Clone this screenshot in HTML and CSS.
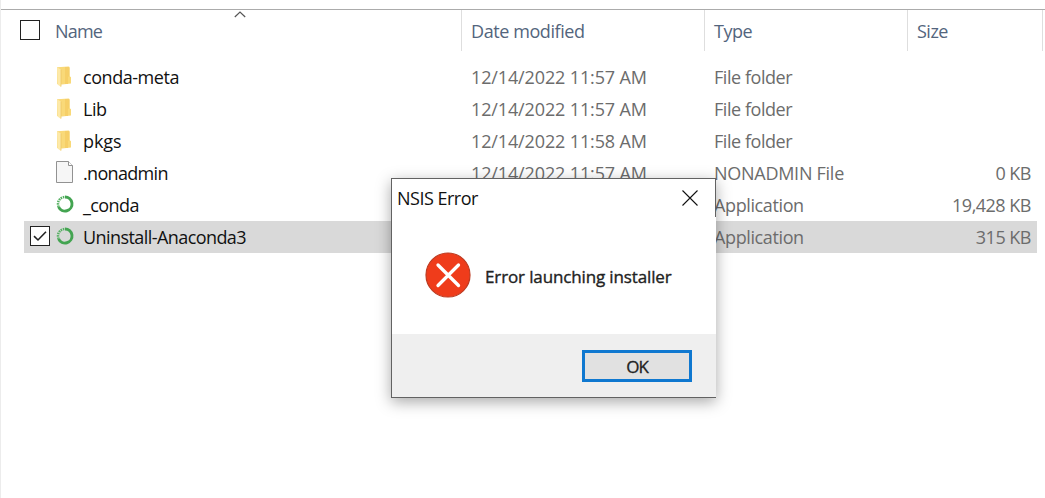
FILE: index.html
```html
<!DOCTYPE html>
<html lang="en">
<head>
<meta charset="utf-8">
<title>File list</title>
<link rel="stylesheet" href="styles.css">
</head>
<body>
<svg class="defs" aria-hidden="true">
  <symbol id="folder" viewBox="0 0 16 22">
    <path d="M1 1.2 L12.5 .6 Q13.5 .6 13.5 1.6 V10 L15 11.3 V17.5 L6 18.5 L1 18Z" fill="#f9d978"/>
    <path d="M9 1h3.5q1 0 1 1v8l-1.500 1V18H9z" fill="#f6cf68"/>
    <path d="M1 1.200 L5 3.500 V21 L1.500 18.500Z" fill="#fde9a8"/>
    <path d="M5 3.500V20.500" stroke="#eec766" stroke-width=".8"/>
  </symbol>
  <symbol id="file" viewBox="0 0 18 22">
    <path d="M.5.5h12l4 4v17H.5z" fill="#f6f6f6" stroke="#929292"/>
    <path d="M12.500.5v4h4" fill="#fff" stroke="#929292"/>
  </symbol>
  <symbol id="ring" viewBox="0 0 18 18">
    <path d="M9 2A7 7 0 1 1 2.600 11.800" fill="none" stroke="#43a451" stroke-width="2.900"/>
    <path d="M2.600 11.800A7 7 0 0 1 9 2" fill="none" stroke="#55b062" stroke-width="2.500" stroke-dasharray="1.500 .8"/>
  </symbol>
</svg>
<main class="explorer">
  <header class="head">
    <div class="cell head-name"><span class="box"></span><span>Name</span>
      <svg class="sort" width="12" height="7" viewBox="0 0 12 7"><path d="M.8 6 6 1l5.200 5" fill="none" stroke="#555" stroke-width="1.200"/></svg>
    </div>
    <div class="cell modified">Date modified</div>
    <div class="cell">Type</div>
    <div class="cell">Size</div>
  </header>
  <section class="rows">
    <div class="row"><span class="check"></span><svg class="icon folder"><use href="#folder"/></svg><span class="name">conda-meta</span><span class="date">12/14/2022 11:57 AM</span><span class="type">File folder</span><span class="size"></span></div>
    <div class="row"><span class="check"></span><svg class="icon folder"><use href="#folder"/></svg><span class="name">Lib</span><span class="date">12/14/2022 11:57 AM</span><span class="type">File folder</span><span class="size"></span></div>
    <div class="row"><span class="check"></span><svg class="icon folder"><use href="#folder"/></svg><span class="name pkgs">pkgs</span><span class="date">12/14/2022 11:58 AM</span><span class="type">File folder</span><span class="size"></span></div>
    <div class="row"><span class="check"></span><svg class="icon file"><use href="#file"/></svg><span class="name nonadmin-name">.nonadmin</span><span class="date">12/14/2022 11:57 AM</span><span class="type nonadmin">NONADMIN File</span><span class="size">0 KB</span></div>
    <div class="row"><span class="check"></span><svg class="icon ring"><use href="#ring"/></svg><span class="name tight">_conda</span><span class="date"></span><span class="type app">Application</span><span class="size">19,428 KB</span></div>
    <div class="row selected"><span class="check"><span class="box"><svg width="18" height="18" viewBox="0 0 18 18"><path d="M3 9.200 7 13 15 4.800" fill="none" stroke="#222" stroke-width="1.600"/></svg></span></span><svg class="icon ring"><use href="#ring"/></svg><span class="name tight">Uninstall-Anaconda3</span><span class="date"></span><span class="type app">Application</span><span class="size">315 KB</span></div>
  </section>
</main>
<div class="dialog" role="dialog">
  <div class="titlebar"><span class="title">NSIS Error</span>
    <svg width="16" height="16" viewBox="0 0 16 16"><path d="M.5.5l15 15M15.500.5l-15 15" stroke="#111" stroke-width="1.100"/></svg>
  </div>
  <div class="content">
    <svg width="46" height="46" viewBox="0 0 46 46"><circle cx="23" cy="23" r="22" fill="#ef3c1b" stroke="#bd3a20" stroke-width="1.200"/><path d="M13 13l20.500 20.500M33.500 13 13 33.500" stroke="#fff" stroke-width="3.300" stroke-linecap="round"/></svg>
    <span class="message">Error launching installer</span>
  </div>
  <div class="footer"><button class="ok">OK</button></div>
</div>
</body>
</html>
```
FILE: styles.css
```css
* { box-sizing: border-box; }
body {
  margin: 0;
  width: 1045px;
  height: 498px;
  overflow: hidden;
  background: #fff;
  color: #111;
  font: 18px/32px "Open Sans", "Noto Sans", sans-serif;
  white-space: nowrap;
}
svg { display: block; flex: none; }
.defs { position: absolute; width: 0; height: 0; }
.explorer { height: 498px; padding-top: 9px; border-left: 1px solid #ececec; }
.head {
  display: grid;
  grid-template-columns: 461px 243px 203px 135px;
  height: 43px;
  border-top: 1px solid #ababab;
  color: #53657d;
}
.cell { height: 41px; padding: 5px 0 0 9px; border-right: 1px solid #dedede; letter-spacing: -.5px; }
.modified { letter-spacing: -.42px; }
.head-name { position: relative; display: flex; padding-left: 19px; letter-spacing: -.8px; }
.head-name .box { margin: 5px 15px 0 0; }
.sort { position: absolute; left: 233px; top: 1px; }
.box { display: block; width: 20px; height: 20px; border: 1px solid #222; background: #fff; }
.rows { padding: 9px 8px 0 23px; }
.row {
  display: grid;
  grid-template-columns: 31px 28px 388px 243px 202px 115px;
  height: 32px;
  color: #6c6c6c;
}
.selected { background: #d9d9d9; }
.check { padding: 5px 0 0 6px; }
.name { color: #111; letter-spacing: -.45px; }
.tight { letter-spacing: -.57px; }
.nonadmin-name { letter-spacing: -.68px; }
.pkgs { letter-spacing: -.1px; }
.date { letter-spacing: -.13px; }
.type { letter-spacing: -.45px; }
.nonadmin { letter-spacing: -.27px; }
.app { letter-spacing: -.38px; }
.size { text-align: right; letter-spacing: -.5px; }
.folder { width: 16px; height: 22px; margin: 5px 0 0 1px; }
.file { width: 18px; height: 22px; margin: 4px 0 0 1px; }
.ring { width: 18px; height: 18px; margin: 6px 0 0 1px; }
.dialog {
  position: absolute;
  left: 391px;
  top: 178px;
  width: 325px;
  height: 220px;
  display: flex;
  flex-direction: column;
  border: 1px solid #626262;
  border-right: 0;
  background: #fff;
  box-shadow: 0 4px 14px rgba(0,0,0,.34);
}
.titlebar { display: flex; justify-content: space-between; height: 38px; padding: 3px 17px 0 5px; border-right: 1px solid #626262; }
.titlebar svg { margin-top: 8px; }
.title { letter-spacing: -.5px; }
.content { display: flex; flex: 1; padding: 35px 0 0 33px; }
.message { margin: 9px 0 0 14px; font-size: 17px; letter-spacing: -.13px; color: #222; -webkit-text-stroke: .35px #222; }
.footer { display: flex; justify-content: flex-end; height: 63px; padding: 16px 24px 0 0; background: #efefef; }
.ok { width: 110px; height: 32px; padding: 2px 0 0; border: 3px solid #0f78d0; background: #e1e1e1; color: #222; font: 17px/24px "Open Sans", sans-serif; letter-spacing: -1px; -webkit-text-stroke: .3px #222; }
```
